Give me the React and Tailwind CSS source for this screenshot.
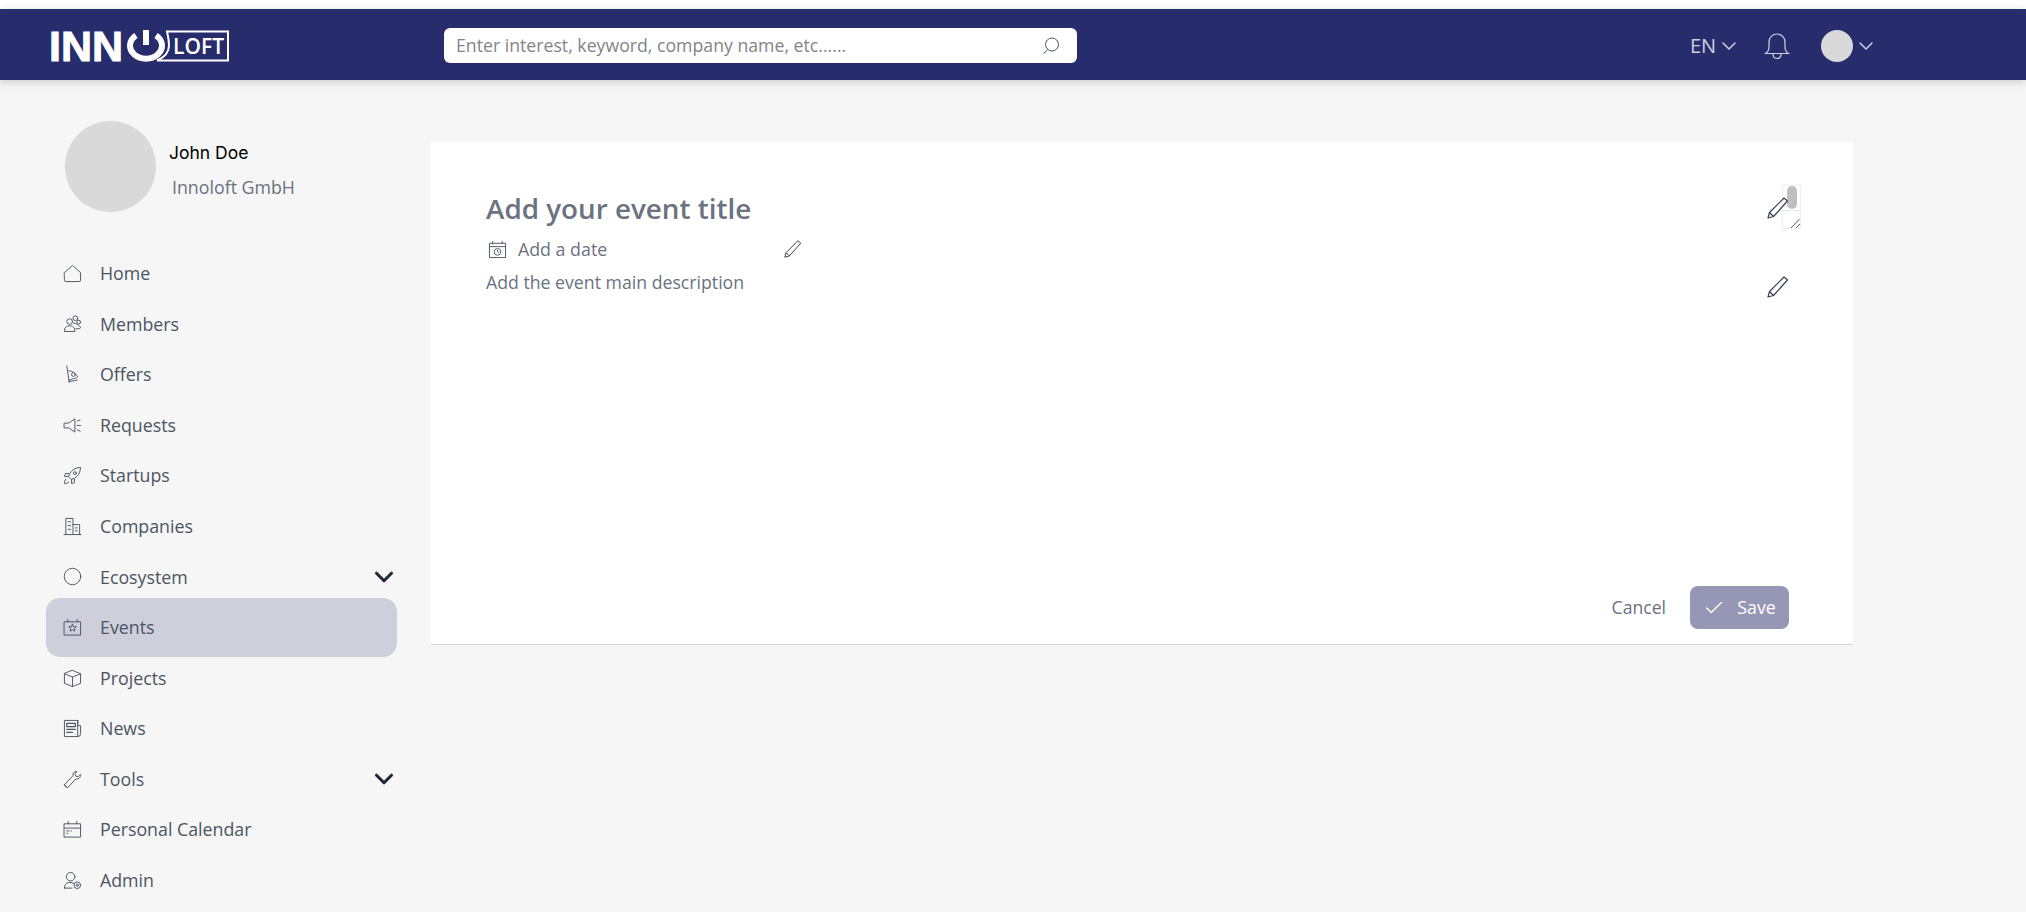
import React from 'react';
import { ChevronDown, Check } from 'lucide-react';

const OPEN = "font-['Open_Sans',sans-serif]";

// line icons for the side nav, all on a 20 box
const Ico = ({ children, className = "w-5 h-5 text-[#4b5563]", sw = 1 }) => (
  <svg viewBox="0 0 20 20" fill="none" stroke="currentColor" strokeWidth={sw} strokeLinecap="round" strokeLinejoin="round" className={className}>
    {children}
  </svg>
);

const icons = {
  home: <path d="M1.500 9 10 1.500 18.500 9v8a1.500 1.500 0 0 1-1.500 1.500H3A1.500 1.500 0 0 1 1.500 17z" />,
  members: (
    <>
      <circle cx="7" cy="8" r="3" />
      <path d="M1.500 18c0-4 2-5.500 5.500-5.500s5.500 1.500 5.500 5.500z" />
      <circle cx="13" cy="4.500" r="2.500" />
      <circle cx="16.500" cy="8.500" r="2" />
      <path d="M11 9.500c3 .5 6 2 7.500 4.500l-1 1.500h-4" />
    </>
  ),
  offers: (
    <>
      <path d="M4 1l2.500 17" />
      <path d="M6 6c4 0 7 3 9.500 6.500-1 1.500-3 1.500-5 2L6.500 16" />
      <circle cx="11" cy="10" r="2" />
      <path d="M6 17.500l9-1.500" />
    </>
  ),
  requests: (
    <>
      <path d="M1.500 7.500h4.500L12.500 3v14L6 12.500H1.500z" />
      <path d="M15 5.500l3-1.500M15 10h3.500M15 14.500l3 1.500" />
    </>
  ),
  startups: (
    <>
      <path d="M6 11c1-5 5-9 12.500-9.500C18 9 14 13 9 14z" />
      <circle cx="12.500" cy="7.500" r="1.500" />
      <path d="M6 8H2.500L1.500 11h4M12 14v3.500l-3 1v-4M3 14c-1 1-1.500 2.500-1.500 4.500 2 0 3.500-.5 4.500-1.500" />
    </>
  ),
  companies: (
    <>
      <path d="M1 18.500h18" />
      <path d="M3 18.500V1.500h7.500v17" />
      <path d="M10.500 8h7v10.500" />
      <path d="M5.500 5h2.500M5.500 9h2.500M5.500 13h2.500M13 11.500h2M13 14.500h2" />
    </>
  ),
  ecosystem: <circle cx="10" cy="10" r="8.700" />,
  events: (
    <>
      <path d="M1.500 4h17v14h-17z" />
      <path d="M5 1.500V4M15 1.500V4" />
      <path d="M10 6.500l1.100 2.500 2.800.3-2.100 1.800.6 2.700-2.400-1.400-2.400 1.400.6-2.700-2.100-1.800 2.800-.3z" />
    </>
  ),
  projects: (
    <>
      <path d="M10 1.500l8.500 3.500v10L10 18.500 1.500 15V5z" />
      <path d="M1.500 5L10 8.500 18.500 5M10 8.500v10" />
    </>
  ),
  news: (
    <>
      <path d="M15.500 1.500h-14v17h14a3 3 0 0 0 3-3V7h-3z" />
      <path d="M15.500 1.500v17" />
      <path d="M4 4.500h9v3.500H4zM4 11h9M4 14h6" strokeWidth="1.300" />
    </>
  ),
  tools: (
    <>
      <path d="M1.500 15.500l9-9.500c-.5-2.500 1-4.500 4-4.500l-2 3 1 2 2.500.5 2.500-2.500c.5 3-2 5.500-5 5l-8.500 9z" />
      <path d="M1.500 15.500l2 2.500" />
    </>
  ),
  calendar: (
    <>
      <path d="M1.500 4h17v14h-17z" />
      <path d="M1.500 8.500h17M5.500 1.500V4M14.500 1.500V4" />
      <path d="M4 11.500h2.500M8.500 11.500h.5M4 14h1" />
    </>
  ),
  admin: (
    <>
      <circle cx="8" cy="6" r="4.500" />
      <path d="M1.500 18c0-4 2.500-6 6-6 1.500 0 2.500.3 3.500 1M1.500 18h8" />
      <circle cx="15" cy="15" r="3.500" />
      <circle cx="15" cy="15" r="1.200" />
    </>
  ),
};

const items = [
  ['Home', 'home'],
  ['Members', 'members'],
  ['Offers', 'offers'],
  ['Requests', 'requests'],
  ['Startups', 'startups'],
  ['Companies', 'companies'],
  ['Ecosystem', 'ecosystem', 'more'],
  ['Events', 'events', 'active'],
  ['Projects', 'projects'],
  ['News', 'news'],
  ['Tools', 'tools', 'more'],
  ['Personal Calendar', 'calendar'],
  ['Admin', 'admin'],
];

const Pencil = ({ className }) => (
  <svg viewBox="0 0 22 22" fill="none" stroke="#374151" strokeWidth="1.200" strokeLinejoin="round" className={className}>
    <path d="M1 21l1.500-5.500L17 1l3.500 3L6.500 19.500z" />
    <path d="M2.500 15.500l4 4" />
  </svg>
);

const Logo = () => (
  <div className="flex items-start h-[32px] text-white">
    <span className="font-['Liberation_Sans',sans-serif] font-bold text-[43px] leading-[32px] [-webkit-text-stroke:1px_white]">INN</span>
    <div className="relative w-[102px] h-[32px] ml-[4px] shrink-0">
      <svg viewBox="0 0 102 32" className="w-[102px] h-[32px]" fill="none" stroke="white">
        <path d="M9 5.500a16 13 0 1 0 20 0" strokeWidth="6" />
        <path d="M19 0v15" strokeWidth="6" />
        <path d="M40 1.500H101V30.500H30C38 27 42 21 42 15.500 42 10 41 6 40 1.500Z" strokeWidth="2" />
      </svg>
      <span className="absolute left-[46px] top-[4px] font-['Open_Sans',sans-serif] font-semibold text-[21px] leading-[24px]">LOFT</span>
    </div>
  </div>
);

const App = () => {
  return (
    <div className={`${OPEN} w-[2026px] min-h-[922px] bg-white pt-[9px] pb-[10px]`}>
      <header className="h-[71px] pt-[2px] bg-[#272d6c] shadow-[0_2px_8px_rgba(0,0,0,0.18)] flex items-center relative z-10">
        <div className="w-[444px] pl-[49px] shrink-0"><Logo /></div>
        <div className="w-[633px] h-[35px] bg-white rounded-[6px] flex items-center pl-[12px] pr-[16px] justify-between">
          <span className="text-[17.700px] text-[#848484]">Enter interest, keyword, company name, etc......</span>
          <svg viewBox="0 0 20 20" fill="none" stroke="#4b5563" strokeWidth="1" className="w-5 h-5">
            <circle cx="11" cy="8.500" r="6.500" />
            <path d="M6.500 13.500 2.500 18" />
          </svg>
        </div>
        <div className="ml-[613px] flex items-center text-[#cfd0e2]">
          <span className="text-[20px] leading-none">EN</span>
          <ChevronDown className="w-[24px] h-[24px] ml-[1px]" strokeWidth={1.500} />
          <svg viewBox="0 0 26 28" fill="none" stroke="currentColor" strokeWidth="1.200" className="w-[26px] h-[28px] ml-[23px]">
            <path d="M1.500 21.500c2.500-1.500 3.500-3 3.500-6.500V10c0-4.500 3.500-8 8-8s8 3.500 8 8v5c0 3.500 1 5 3.500 6.500z" />
            <path d="M9 22c0 6 8 6 8 0" />
          </svg>
          <div className="w-[32px] h-[32px] rounded-full bg-[#d9d9d9] ml-[31px]" />
          <ChevronDown className="w-[24px] h-[24px] ml-[1px]" strokeWidth={1.500} />
        </div>
      </header>

      <div className="bg-[#f6f6f6] h-[832px] flex overflow-hidden">
        <aside className="w-[431px] shrink-0 pt-[41px]">
          <div className="flex pl-[65px]">
            <div className="w-[91px] h-[91px] rounded-full bg-[#d9d9d9]" />
            <div className="ml-[13px] pt-[20px]">
              <div className="font-['Inter',sans-serif] text-[17.500px] leading-[24px] text-black">John Doe</div>
              <div className="text-[17.800px] leading-[24px] text-[#6b7280] mt-[10px] ml-[3px]">Innoloft GmbH</div>
            </div>
          </div>
          <nav className="mt-[36px] ml-[46px] w-[351px]">
            {items.map(([label, icon, flag]) => (
              <div
                key={label}
                className={`h-[50.600px] flex items-center pl-[17px] text-[17.800px] text-[#4b5563] relative ${flag === 'active' ? "before:content-[''] before:absolute before:inset-x-0 before:top-[-4px] before:bottom-[-4px] before:bg-[#cfcfdc] before:rounded-[14px]" : ''}`}
              >
                <Ico className="w-[19px] h-[19px] text-[#4b5563] relative">{icons[icon]}</Ico>
                <span className="ml-[18px] relative">{label}</span>
                {flag === 'more' && <ChevronDown className="ml-auto mr-[-2px] w-[30px] h-[30px] text-[#1f2937]" strokeWidth={2.500} />}
              </div>
            ))}
          </nav>
        </aside>

        <main className="w-[1422px] h-[503px] mt-[62px] bg-white border-b border-[#d1d5db] relative pl-[55px] pr-[64px] pt-[49px] flex flex-col">
          <div className="flex items-center justify-between h-[34px]">
            <h1 className="text-[27.800px] leading-[34px] font-semibold text-[#6b7280]">Add your event title</h1>
            <Pencil className="w-[22px] h-[22px] relative z-10 mt-[-1px]" />
          </div>
          <div className="flex items-center mt-[9px] h-[30px]">
            <svg viewBox="0 0 20 20" fill="none" stroke="#4b5563" strokeWidth="1" className="w-[19px] h-[19px] ml-[2px]">
              <path d="M1.500 3.500h17v15h-17z" />
              <path d="M5 1v2.500M15 1v2.500M1.500 7h17" />
              <circle cx="10" cy="12.500" r="3.500" />
              <path d="M10 10.500v2l1.500.8" />
            </svg>
            <span className="ml-[11px] text-[17.800px] text-[#6b7280]">Add a date</span>
            <Pencil className="w-[18px] h-[18px] ml-[177px]" />
          </div>
          <div className="flex items-start justify-between mt-[3px] h-[30px]">
            <span className="text-[17.700px] leading-[30px] text-[#6b7280]">Add the event main description</span>
            <Pencil className="w-[22px] h-[22px] mt-[9px]" />
          </div>

          <div className="mt-auto mb-[15px] flex items-center justify-end">
            <span className="text-[17.600px] text-[#6b7280]">Cancel</span>
            <button className="ml-[24px] w-[99px] h-[43px] rounded-[8px] bg-[#9696b5] text-white flex items-center justify-center text-[17.800px]">
              <Check className="w-[22px] h-[22px]" strokeWidth={1.500} />
              <span className="ml-[12px]">Save</span>
            </button>
          </div>

          {/* textarea scrollbar left over in the corner */}
          <div className="absolute left-[1351px] top-[43px] w-[19px] h-[44px] bg-white border border-[#eeeeee] flex flex-col">
            <div className="h-[25px] border-b border-[#e5e5e5] flex justify-center">
              <div className="w-[10px] h-[23px] rounded-[5px] bg-[#bfbfbf]" />
            </div>
            <svg viewBox="0 0 17 17" className="w-[17px] h-[17px]" stroke="#4b5563" strokeWidth="1">
              <path d="M8 17 16.500 8M13 17 17 13" />
            </svg>
          </div>
        </main>
      </div>
    </div>
  );
};

export default App;
